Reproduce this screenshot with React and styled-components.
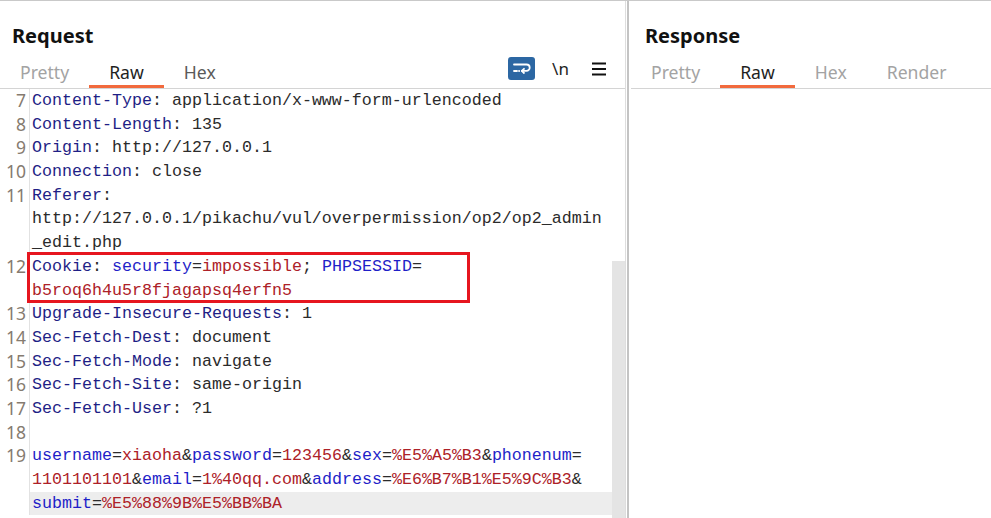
import React from 'react';
import styled, { createGlobalStyle } from 'styled-components';

const GlobalStyle = createGlobalStyle`
  body {
    margin: 0;
    background: #ffffff;
  }
`;

const colors = {
  key: '#1f1f86',
  val: '#2b2b2b',
  pk: '#1f1fc8',
  pv: '#ad2128',
  num: '#857b70',
};

const Page = styled.div`
  display: flex;
  height: 518px;
  border-top: 1px solid #c9c9c9;
  box-sizing: border-box;
  overflow: hidden;
  font-family: 'Noto Sans', 'Open Sans', sans-serif;
  background: #fff;
`;

const RequestPanel = styled.section`
  width: 626px;
  flex: none;
  display: flex;
  flex-direction: column;
  border-right: 1px solid #dedede;
  box-sizing: border-box;
`;

const Divider = styled.div`
  width: 2px;
  margin-left: 1px;
  background: #c4c4c4;
  flex: none;
`;

const ResponsePanel = styled.section`
  flex: 1;
  display: flex;
  flex-direction: column;
  padding-left: 2px;
`;

const Title = styled.h2`
  margin: 0;
  padding: 23px 0 0 ${(p) => p.$indent}px;
  font-size: 20px;
  line-height: 24px;
  font-weight: 700;
  color: #111;
`;

const TabBar = styled.div`
  height: 40px;
  display: flex;
  align-items: flex-end;
  border-bottom: 1px solid #d4d4d4;
`;

const toneColor = {
  active: '#1f1f1f',
  normal: '#5a5a5a',
  muted: '#a3a3a3',
};

const Tab = styled.div`
  padding: 0 20px 2px;
  font-size: 17.6px;
  line-height: 22px;
  color: ${(p) => toneColor[p.$tone]};
  border-bottom: 3px solid ${(p) => (p.$tone === 'active' ? '#f26a3d' : 'transparent')};
`;

const ToolBar = styled.div`
  margin-left: auto;
  align-self: flex-start;
  margin-top: 9px;
  padding-right: 13px;
  display: flex;
`;

const Tool = styled.div`
  width: ${(p) => p.$w}px;
  height: 23px;
  display: flex;
  align-items: center;
  justify-content: center;
  font-size: 17px;
  color: #1e1e1e;
`;

const WrapBadge = styled.div`
  width: 27px;
  height: 23px;
  border-radius: 3px;
  background: #2c67a3;
  display: flex;
  align-items: center;
  justify-content: center;
`;

const Editor = styled.div`
  flex: 1;
  display: flex;
  min-height: 0;
`;

const Lines = styled.div`
  flex: 1;
  overflow: hidden;
`;

const Row = styled.div`
  display: flex;
  height: 23.7px;
`;

const Gutter = styled.div`
  width: 30px;
  flex: none;
  padding-right: 3px;
  box-sizing: border-box;
  border-right: 1px solid #e2e2e2;
  text-align: right;
  font-family: 'Noto Sans', sans-serif;
  font-size: 17.5px;
  line-height: 23.7px;
  color: ${colors.num};
`;

const Code = styled.div`
  flex: 1;
  padding-left: 2px;
  white-space: pre;
  font-family: 'Liberation Mono', 'DejaVu Sans Mono', monospace;
  font-size: 16.67px;
  line-height: 23.7px;
  color: ${colors.val};
  background: ${(p) => (p.$current ? '#ededed' : 'transparent')};
`;

const Token = styled.span`
  color: ${(p) => colors[p.$kind]};
`;

const Marked = styled.div`
  position: relative;

  &::after {
    content: '';
    position: absolute;
    left: 27px;
    top: -3px;
    width: 443px;
    height: 51px;
    border: 3px solid #e6161f;
    box-sizing: border-box;
    pointer-events: none;
  }
`;

const ScrollTrack = styled.div`
  width: 13px;
  flex: none;
  display: flex;
  flex-direction: column;
`;

const Thumb = styled.div`
  margin-top: 172px;
  flex: 1;
  background: #e4e4e4;
`;

const rows = [
  { n: 7, t: [['Content-Type', 'key'], [': application/x-www-form-urlencoded', 'val']] },
  { n: 8, t: [['Content-Length', 'key'], [': 135', 'val']] },
  { n: 9, t: [['Origin', 'key'], [': http://127.0.0.1', 'val']] },
  { n: 10, t: [['Connection', 'key'], [': close', 'val']] },
  { n: 11, t: [['Referer', 'key'], [':', 'val']] },
  { t: [['http://127.0.0.1/pikachu/vul/overpermission/op2/op2_admin', 'val']] },
  { t: [['_edit.php', 'val']] },
];

const cookieRows = [
  {
    n: 12,
    t: [
      ['Cookie', 'key'], [': ', 'val'], ['security', 'pk'], ['=', 'val'],
      ['impossible', 'pv'], ['; ', 'val'], ['PHPSESSID', 'pk'], ['=', 'val'],
    ],
  },
  { t: [['b5roq6h4u5r8fjagapsq4erfn5', 'pv']] },
];

const restRows = [
  { n: 13, t: [['Upgrade-Insecure-Requests', 'key'], [': 1', 'val']] },
  { n: 14, t: [['Sec-Fetch-Dest', 'key'], [': document', 'val']] },
  { n: 15, t: [['Sec-Fetch-Mode', 'key'], [': navigate', 'val']] },
  { n: 16, t: [['Sec-Fetch-Site', 'key'], [': same-origin', 'val']] },
  { n: 17, t: [['Sec-Fetch-User', 'key'], [': ?1', 'val']] },
  { n: 18, t: [] },
  {
    n: 19,
    t: [
      ['username', 'pk'], ['=', 'val'], ['xiaoha', 'pv'], ['&', 'val'],
      ['password', 'pk'], ['=', 'val'], ['123456', 'pv'], ['&', 'val'],
      ['sex', 'pk'], ['=', 'val'], ['%E5%A5%B3', 'pv'], ['&', 'val'],
      ['phonenum', 'pk'], ['=', 'val'],
    ],
  },
  {
    t: [
      ['1101101101', 'pv'], ['&', 'val'], ['email', 'pk'], ['=', 'val'],
      ['1%40qq.com', 'pv'], ['&', 'val'], ['address', 'pk'], ['=', 'val'],
      ['%E6%B7%B1%E5%9C%B3', 'pv'], ['&', 'val'],
    ],
  },
  { t: [['submit', 'pk'], ['=', 'val'], ['%E5%88%9B%E5%BB%BA', 'pv']], current: true },
];

const CodeRow = ({ row }) => (
  <Row>
    <Gutter>{row.n ?? ''}</Gutter>
    <Code $current={row.current}>
      {row.t.map(([text, kind], i) => (
        <Token key={i} $kind={kind}>{text}</Token>
      ))}
    </Code>
  </Row>
);

const WrapIcon = () => (
  <svg width="20" height="16" viewBox="0 0 20 16" fill="none" stroke="#fff" strokeWidth="1.8" strokeLinecap="round" strokeLinejoin="round">
    <path d="M2 3.5H14.5a3.2 3.2 0 0 1 0 6.4H10" />
    <path d="M12 7.8L9.8 9.9L12 12" />
    <path d="M2 10H5" />
    <path d="M7 10H7.2" />
  </svg>
);

const MenuIcon = () => (
  <svg width="14" height="14" viewBox="0 0 14 14" stroke="#111" strokeWidth="2">
    <path d="M0 1.5H14M0 7H14M0 12.5H14" />
  </svg>
);

const Header = ({ title, indent, tabs, children }) => (
  <>
    <Title $indent={indent}>{title}</Title>
    <TabBar>
      {tabs.map(([label, tone]) => (
        <Tab key={label} $tone={tone}>{label}</Tab>
      ))}
      {children}
    </TabBar>
  </>
);

const App = () => (
  <>
    <GlobalStyle />
    <Page>
      <RequestPanel>
        <Header
          title="Request"
          indent={12}
          tabs={[['Pretty', 'muted'], ['Raw', 'active'], ['Hex', 'normal']]}
        >
          <ToolBar>
            <Tool $w={27}>
              <WrapBadge>
                <WrapIcon />
              </WrapBadge>
            </Tool>
            <Tool $w={51}>{'\\n'}</Tool>
            <Tool $w={26}>
              <MenuIcon />
            </Tool>
          </ToolBar>
        </Header>
        <Editor>
          <Lines>
            {rows.map((row, i) => <CodeRow key={`a${i}`} row={row} />)}
            <Marked>
              {cookieRows.map((row, i) => <CodeRow key={`b${i}`} row={row} />)}
            </Marked>
            {restRows.map((row, i) => <CodeRow key={`c${i}`} row={row} />)}
          </Lines>
          <ScrollTrack>
            <Thumb />
          </ScrollTrack>
        </Editor>
      </RequestPanel>
      <Divider />
      <ResponsePanel>
        <Header
          title="Response"
          indent={14}
          tabs={[['Pretty', 'muted'], ['Raw', 'active'], ['Hex', 'muted'], ['Render', 'muted']]}
        />
      </ResponsePanel>
    </Page>
  </>
);

export default App;
